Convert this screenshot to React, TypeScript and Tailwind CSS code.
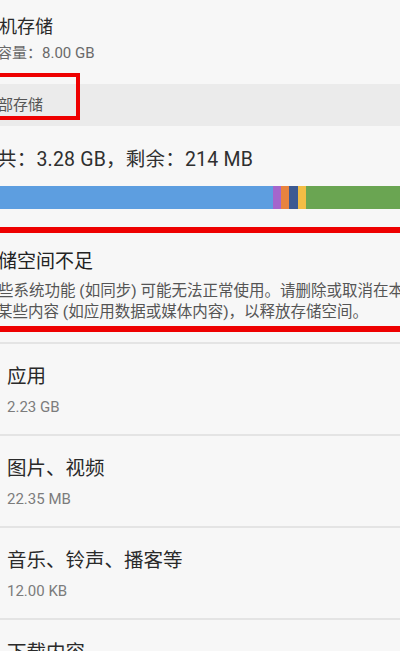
const cjk = "font-['Roboto','Noto_Sans_CJK_SC','Noto_Sans',sans-serif]";

const segments = [
  { w: 273, color: "#5d9ee0" },
  { w: 8, color: "#a466cc" },
  { w: 8, color: "#e8833f" },
  { w: 9, color: "#3d5a92" },
  { w: 8, color: "#f2bd45" },
  { w: 94, color: "#6aa552" },
];

const items = [
  { title: "应用", size: "2.23 GB" },
  { title: "图片、视频", size: "22.35 MB" },
  { title: "音乐、铃声、播客等", size: "12.00 KB" },
  { title: "下载内容", size: "" },
];

export default function App() {
  return (
    <div className={`h-[651px] w-[400px] overflow-hidden bg-[#f7f7f7] ${cjk}`}>
      {/* 手机存储 */}
      <div className="pt-[16px] pb-[4px]">
        <div className="-ml-[1px] text-[18px] leading-[22px] text-[#2a2a2a]">机存储</div>
        <div className="mt-[6px] -ml-[3px] text-[15px] leading-[18px] text-[#6a6a6a]">容量：8.00 GB</div>
      </div>

      <div className="relative mt-[18px] flex h-[42px] items-center bg-[#ebebeb]">
        <span className="-ml-[2px] text-[15px] text-[#555]">部存储</span>
        <span className="absolute -left-[10px] -top-[11px] h-[47px] w-[90px] border-[4px] border-[#ee0000]" />
      </div>

      <div className="pt-[22px]">
        <div className="-ml-[3px] text-[19.5px] tracking-[0.2px] leading-[24px] text-[#2f2f2f]">共：3.28 GB，剩余：214 MB</div>
        <div className="mt-[14px] flex h-[23px]">
          {segments.map((s, i) => (
            <div key={i} className="h-full shrink-0" style={{ width: s.w, backgroundColor: s.color }} />
          ))}
        </div>
      </div>

      <div className="mt-[18px] border-y-[6px] border-[#ee0000] pt-[17px] pb-[3px]">
        <div className="-ml-[2px] text-[19px] leading-[24px] text-[#222]">储空间不足</div>
        <div className="mt-[7px] -ml-[2px] whitespace-nowrap text-[15.5px] leading-[21px] text-[#555]">
          些系统功能 (如同步) 可能无法正常使用。请删除或取消在本
        </div>
        <div className="-ml-[3px] whitespace-nowrap text-[15.5px] leading-[21px] text-[#555]">
          某些内容 (如应用数据或媒体内容)，以释放存储空间。
        </div>
      </div>

      <div className="mt-[10px]">
        {items.map((it) => (
          <div key={it.title} className="border-t-2 border-[#e4e4e4] px-[7px] pt-[21px] pb-[18px]">
            <div className="text-[19.5px] leading-[24px] text-[#2a2a2a]">{it.title}</div>
            <div className="mt-[9px] text-[15px] leading-[18px] text-[#7c7c7c]">{it.size}</div>
          </div>
        ))}
      </div>
    </div>
  );
}
